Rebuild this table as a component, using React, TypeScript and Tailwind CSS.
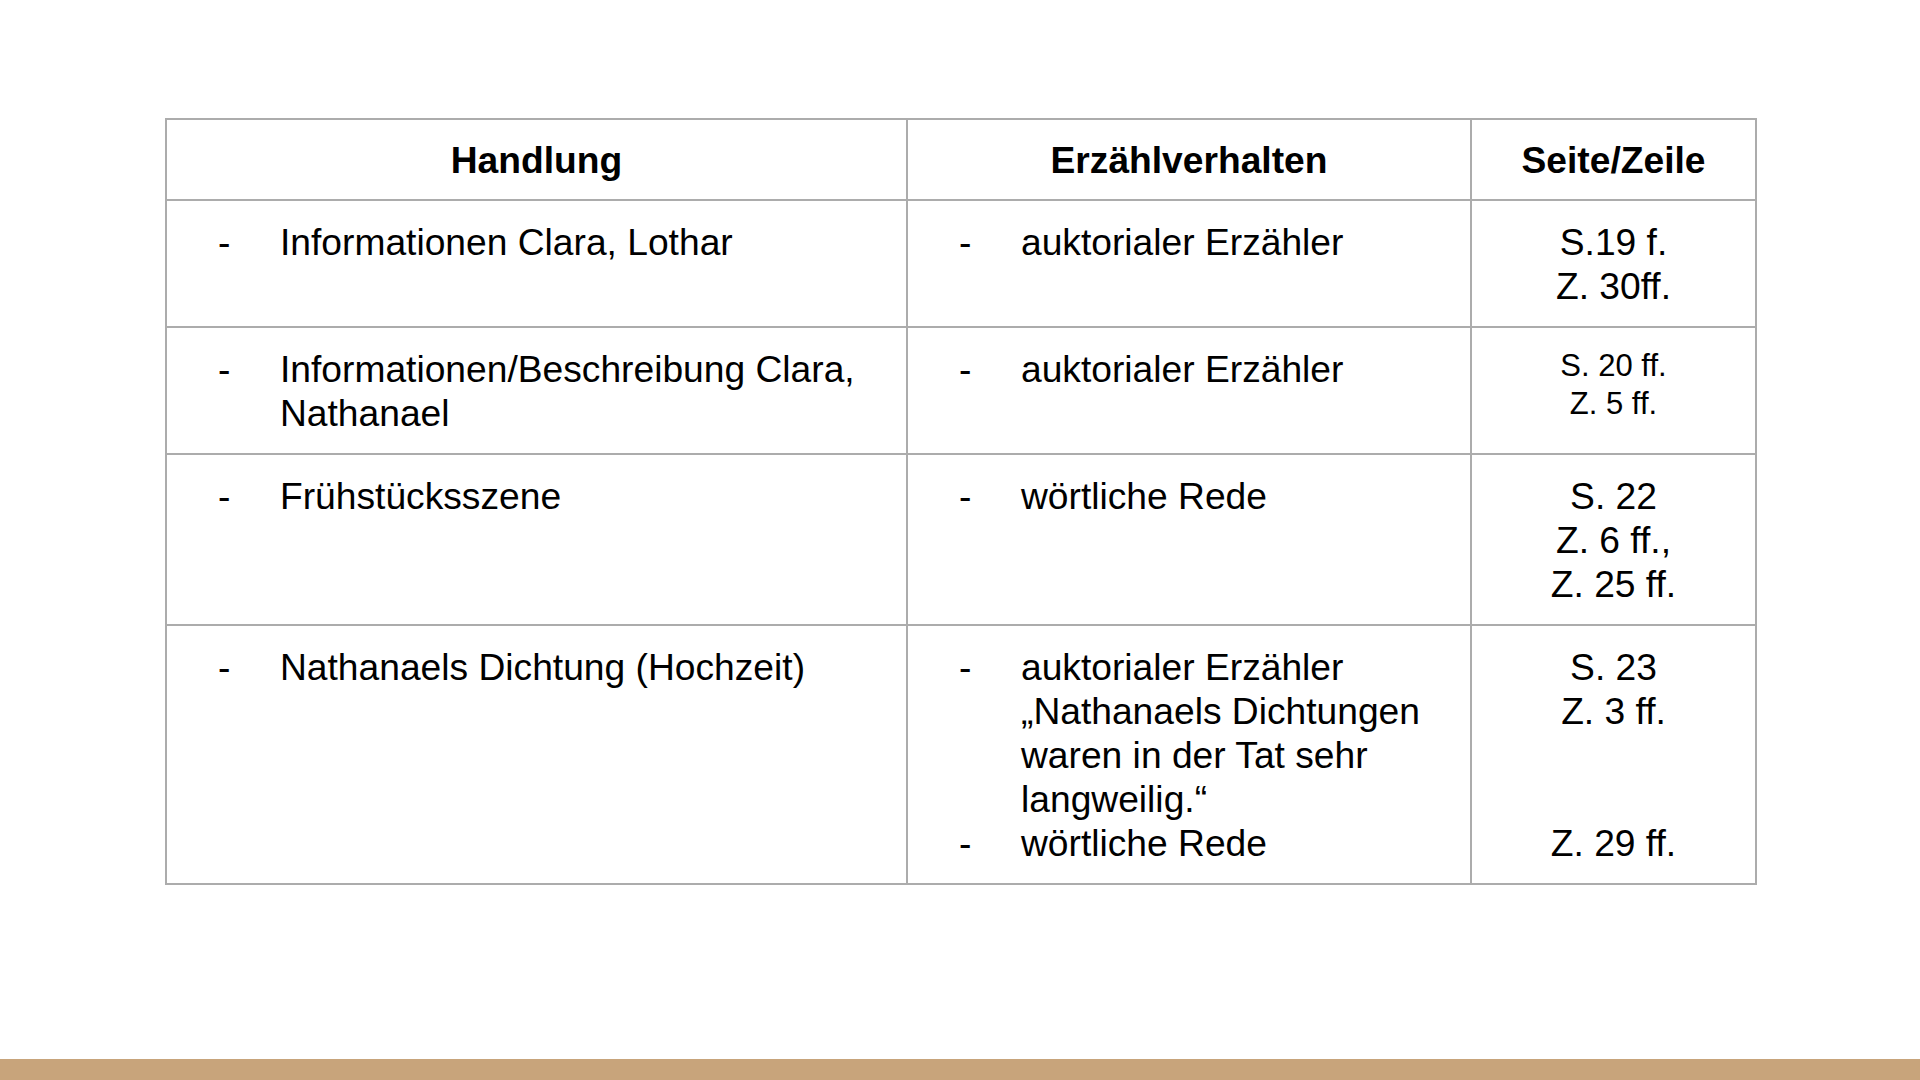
const font = { fontFamily: '"Liberation Sans", Arial, sans-serif' };

type Row = {
  plot: string[];
  narration: string[][];
  refs: string[];
  small?: boolean;
};

const rows: Row[] = [
  {
    plot: ["Informationen Clara, Lothar"],
    narration: [["auktorialer Erzähler"]],
    refs: ["S.19 f.", "Z. 30ff."]
  },
  {
    plot: ["Informationen/Beschreibung Clara,", "Nathanael"],
    narration: [["auktorialer Erzähler"]],
    refs: ["S. 20 ff.", "Z. 5 ff."],
    small: true
  },
  {
    plot: ["Frühstücksszene"],
    narration: [["wörtliche Rede"]],
    refs: ["S. 22", "Z. 6 ff.,", "Z. 25 ff."]
  },
  {
    plot: ["Nathanaels Dichtung (Hochzeit)"],
    narration: [
      ["auktorialer Erzähler", "„Nathanaels Dichtungen", "waren in der Tat sehr", "langweilig.“"],
      ["wörtliche Rede"]
    ],
    refs: ["S. 23", "Z. 3 ff.", "\u00a0", "\u00a0", "Z. 29 ff."]
  }
];

function Bullet({ lines }: { lines: string[] }) {
  return (
    <div className="flex pl-[51px]">
      <span className="w-[62px] shrink-0">-</span>
      <div>
        {lines.map((line, i) => (
          <div key={i} className="whitespace-nowrap">
            {line}
          </div>
        ))}
      </div>
    </div>
  );
}

export default function App() {
  return (
    <div className="flex h-[1080px] w-[1920px] flex-col bg-white text-black" style={font}>
      <div className="flex-1 pl-[165px] pt-[118px]">
        <table className="w-[1590px] table-fixed border-collapse text-[37.2px] leading-[44px]">
          <colgroup>
            <col className="w-[741px]" />
            <col className="w-[564px]" />
            <col className="w-[285px]" />
          </colgroup>
          <thead>
            <tr>
              {["Handlung", "Erzählverhalten", "Seite/Zeile"].map((h) => (
                <th key={h} className="border-2 border-[#acacac] pt-[18px] pb-[17px] text-center font-bold">
                  {h}
                </th>
              ))}
            </tr>
          </thead>
          <tbody>
            {rows.map((row, i) => (
              <tr key={i}>
                <td className="border-2 border-[#acacac] pt-[19px] pb-[18px] align-top">
                  <Bullet lines={row.plot} />
                </td>
                <td className="border-2 border-[#acacac] pt-[19px] pb-[18px] align-top">
                  {row.narration.map((lines, j) => (
                    <Bullet key={j} lines={lines} />
                  ))}
                </td>
                <td className="border-2 border-[#acacac] pt-[19px] pb-[18px] align-top text-center">
                  <div className={row.small ? "text-[31px] leading-[38px]" : ""}>
                    {row.refs.map((r, j) => (
                      <div key={j}>{r}</div>
                    ))}
                  </div>
                </td>
              </tr>
            ))}
          </tbody>
        </table>
      </div>
      <div className="h-[21px] bg-[#c8a47b]" />
    </div>
  );
}
